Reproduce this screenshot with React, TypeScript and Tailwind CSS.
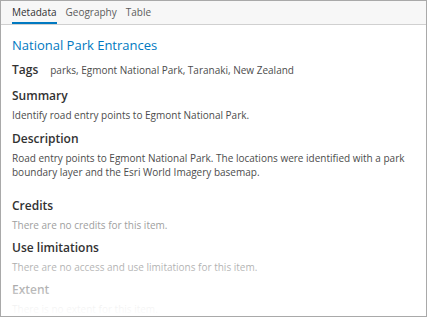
import React from "react";

const font = { fontFamily: '"Open Sans", "Noto Sans", sans-serif' };

function Section({ title, children }: { title: string; children: React.ReactNode }) {
  return (
    <div>
      <h3 className="text-[12px] font-semibold leading-[18px] text-[#323232]">{title}</h3>
      <div className="mt-[3px] text-[10px] leading-[14px]">{children}</div>
    </div>
  );
}

export default function App() {
  return (
    <div
      className="relative w-[427px] h-[317px] overflow-hidden border border-[#a9a9a9] bg-white text-[#4c4c4c]"
      style={font}
    >
      {/* tabs */}
      <div className="flex h-[24px] items-end gap-[9px] border-b border-[#d0d0d0] bg-[#f7f7f7] px-[11px]">
        <div className="border-b-2 border-[#0079c1] pb-[3px] text-[10px] leading-[14px] text-[#323232]">Metadata</div>
        <div className="pb-[5px] text-[10px] leading-[14px] text-[#5c5c5c]">Geography</div>
        <div className="pb-[5px] text-[10px] leading-[14px] text-[#5c5c5c]">Table</div>
      </div>

      <div className="px-[11px] pt-[11px]">
        <h1 className="text-[13px] leading-[18px] text-[#0079c1]">National Park Entrances</h1>

        <div className="mt-[7px] flex items-baseline gap-[12px]">
          <span className="text-[12px] font-semibold leading-[18px] text-[#323232]">Tags</span>
          <span className="text-[10px]">parks, Egmont National Park, Taranaki, New Zealand</span>
        </div>

        <div className="mt-[8px] flex flex-col gap-[8px]">
          <Section title="Summary">Identify road entry points to Egmont National Park.</Section>
          <Section title="Description">
            Road entry points to Egmont National Park. The locations were identified with a park
            boundary layer and the Esri World Imagery basemap.
          </Section>
        </div>

        <div className="mt-[18px] flex flex-col gap-[7px]">
          <Section title="Credits">
            <span className="text-[#a0a0a0]">There are no credits for this item.</span>
          </Section>
          <Section title="Use limitations">
            <span className="text-[#a0a0a0]">There are no access and use limitations for this item.</span>
          </Section>
          <Section title="Extent">
            <span className="text-[#a0a0a0]">There is no extent for this item.</span>
          </Section>
        </div>
      </div>

      {/* fade at the bottom */}
      <div className="pointer-events-none absolute inset-x-0 bottom-0 h-[60px] bg-gradient-to-b from-white/0 via-white/60 to-white" />
    </div>
  );
}
